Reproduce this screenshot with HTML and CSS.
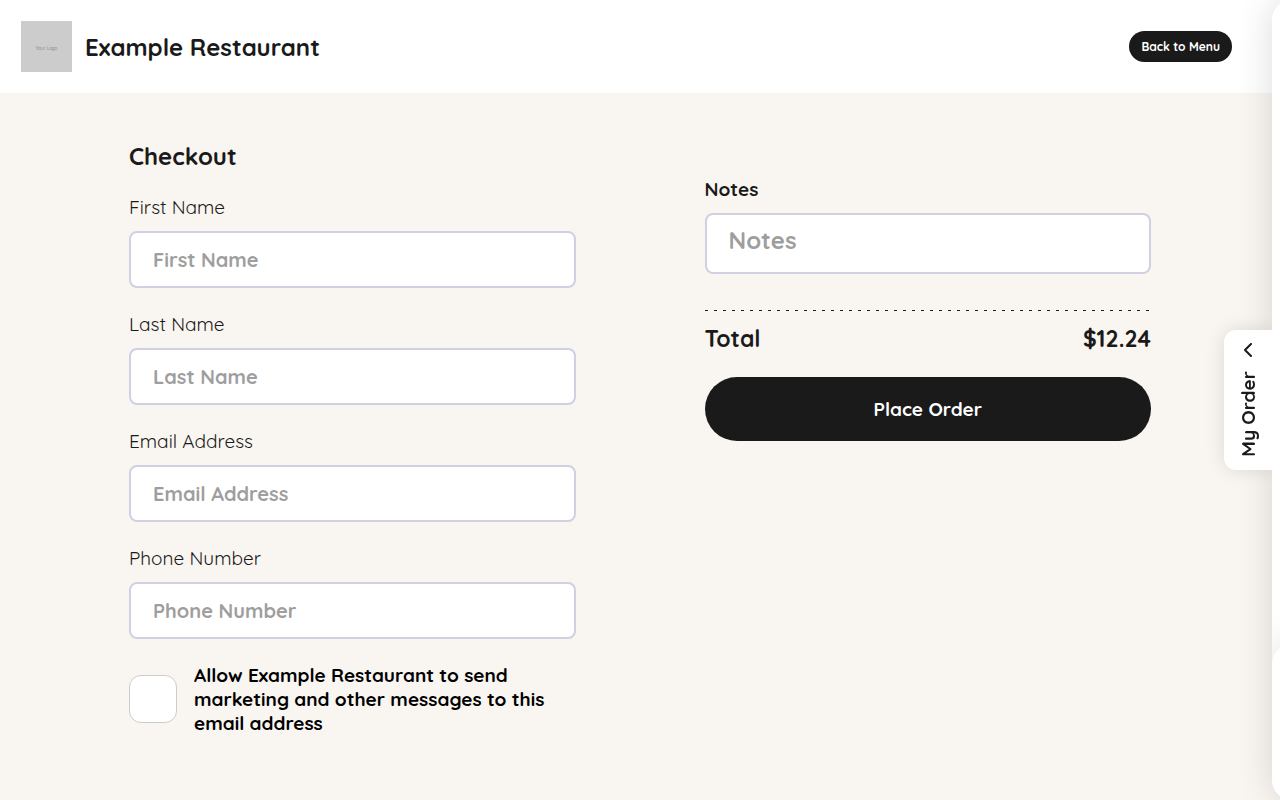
FILE: index.html
```html
<!DOCTYPE html>
<html lang="en">
<head>
    <meta charset="UTF-8">
    <meta name="viewport" content="width=device-width, initial-scale=1.0">
    <title>Checkout - Example Restaurant</title>
    <link rel="stylesheet" href="styles.css">
</head>
<body>

    <!-- Header -->
    <header class="header">
        <div class="brand">
            <svg class="logo" viewBox="0 0 51 51" role="img" aria-label="Your Logo">
                <rect width="51" height="51" fill="#cccccc"/>
                <text x="25.5" y="29" text-anchor="middle" font-family="Lato, sans-serif" font-size="5" fill="#969696">Your Logo</text>
            </svg>
            <h1>Example Restaurant</h1>
        </div>
        <a href="#" class="back-btn">Back to Menu</a>
    </header>

    <!-- Checkout form -->
    <form class="checkout">
        <div class="details">
            <h2>Checkout</h2>
            <div class="field">
                <label for="first-name">First Name</label>
                <input type="text" id="first-name" placeholder="First Name">
            </div>
            <div class="field">
                <label for="last-name">Last Name</label>
                <input type="text" id="last-name" placeholder="Last Name">
            </div>
            <div class="field">
                <label for="email">Email Address</label>
                <input type="email" id="email" placeholder="Email Address">
            </div>
            <div class="field">
                <label for="phone">Phone Number</label>
                <input type="tel" id="phone" placeholder="Phone Number">
            </div>
            <div class="consent">
                <input type="checkbox" id="marketing">
                <label for="marketing">Allow Example Restaurant to send marketing and other messages to this email address</label>
            </div>
        </div>

        <div class="summary">
            <label for="notes">Notes</label>
            <textarea id="notes" rows="1" placeholder="Notes"></textarea>
            <div class="divider"></div>
            <div class="total">
                <span>Total</span>
                <span>$12.24</span>
            </div>
            <button type="submit" class="place-order">Place Order</button>
        </div>
    </form>

    <!-- Order drawer, closed -->
    <aside class="drawer">
        <button type="button" class="drawer-tab">
            <svg class="chevron" viewBox="0 0 10 14" fill="none" stroke="#1a1a1a" stroke-width="2" stroke-linecap="round" stroke-linejoin="round">
                <path d="M8 1 L2 7 L8 13"/>
            </svg>
            <span class="drawer-label">My Order</span>
        </button>
        <div class="drawer-panel">
            <div class="drawer-footer"></div>
        </div>
    </aside>

</body>
</html>
```
FILE: styles.css
```css
* {
    box-sizing: border-box;
}

body {
    margin: 0;
    min-height: 100vh;
    background-color: #f9f5f0;
    color: #1a1a1a;
    font-family: Quicksand, Lato, sans-serif;
}

h1, h2 {
    margin: 0;
    font-size: 24px;
    line-height: 32px;
    font-weight: 700;
}

h2 {
    line-height: 30px;
}

input, textarea, button {
    font-family: inherit;
}

/* Header */
.header {
    display: flex;
    justify-content: space-between;
    align-items: center;
    padding: 21px 48px 21px 21px;
    background-color: #fff;
}

.brand {
    display: flex;
    align-items: center;
    gap: 13px;
}

.logo {
    width: 51px;
    height: 51px;
}

.back-btn {
    padding: 8px 12px;
    border-radius: 16px;
    background-color: #1a1a1a;
    color: #fff;
    font-size: 12px;
    line-height: 15px;
    font-weight: 700;
    text-decoration: none;
}

/* Checkout form */
.checkout {
    display: grid;
    grid-template-columns: 1fr 1fr;
    gap: 129px;
    padding: 48px 129px;
}

.field {
    display: flex;
    flex-direction: column;
    gap: 12px;
    margin-bottom: 24px;
}

h2 + .field {
    margin-top: 24px;
}

.field label {
    font-size: 19px;
    line-height: 24px;
    font-weight: 400;
}

.field input {
    width: 100%;
    height: 57px;
    padding: 0 22px;
    border: 2px solid #d0d0e2;
    border-radius: 8px;
    background-color: #fff;
    font-size: 20px;
    font-weight: 700;
}

.field input::placeholder,
.summary textarea::placeholder {
    color: #9e9e9e;
    opacity: 1;
}

.consent {
    display: flex;
    align-items: center;
    gap: 17px;
    color: #000;
}

.consent input {
    appearance: none;
    flex: none;
    width: 48px;
    height: 48px;
    margin: 0;
    border: 1px solid #ccc;
    border-radius: 12px;
    background-color: #fff;
}

.consent input:checked {
    background-color: #1a1a1a;
}

.consent label {
    font-size: 19px;
    line-height: 24px;
    font-weight: 700;
}

/* Notes and total */
.summary {
    display: flex;
    flex-direction: column;
    padding-top: 36px;
}

.summary label {
    margin-bottom: 12px;
    font-size: 19px;
    line-height: 24px;
    font-weight: 700;
}

.summary textarea {
    width: 100%;
    height: 61px;
    padding: 10px 22px;
    border: 2px solid #d0d0e2;
    border-radius: 8px;
    background-color: #fff;
    font-size: 24px;
    line-height: 30px;
    font-weight: 700;
    resize: none;
    overflow: hidden;
}

.divider {
    height: 1px;
    margin-top: 36px;
    background: repeating-linear-gradient(to right, #1a1a1a 0 3px, transparent 3px 9px);
}

.total {
    display: flex;
    justify-content: space-between;
    margin: 12px 0 22px;
    font-size: 23px;
    line-height: 32px;
    font-weight: 700;
}

.place-order {
    width: 100%;
    height: 64px;
    border: none;
    border-radius: 32px;
    background-color: #1a1a1a;
    color: #fff;
    font-size: 19px;
    font-weight: 700;
    cursor: pointer;
}

/* Order drawer, only its edge shows while closed */
.drawer {
    position: fixed;
    top: 0;
    bottom: 0;
    left: calc(100% - 8px);
    width: 400px;
}

.drawer-panel {
    position: relative;
    display: flex;
    flex-direction: column;
    justify-content: flex-end;
    height: 100%;
    overflow: hidden;
    border-radius: 20px;
    background-color: #fff;
}

.drawer::before {
    content: "";
    position: absolute;
    inset: 0;
    border-radius: 20px;
    box-shadow: 0 0 36px rgba(0, 0, 0, 0.14);
}

.drawer-footer {
    height: 156px;
    border-radius: 20px;
    background-color: #fff;
    box-shadow: 0 0 40px rgba(0, 0, 0, 0.12);
}

.drawer-tab {
    position: absolute;
    top: 50%;
    right: 100%;
    transform: translateY(-50%);
    display: flex;
    flex-direction: column;
    align-items: center;
    gap: 14px;
    width: 48px;
    height: 140px;
    padding: 13px 0 0;
    border: none;
    border-radius: 12px 0 0 12px;
    background-color: #fff;
    color: #1a1a1a;
    box-shadow: 0 0 20px rgba(0, 0, 0, 0.12);
    cursor: pointer;
}

.chevron {
    width: 10px;
    height: 14px;
}

.drawer-label {
    writing-mode: vertical-rl;
    transform: rotate(180deg);
    font-size: 19px;
    line-height: 24px;
    font-weight: 700;
}
```
